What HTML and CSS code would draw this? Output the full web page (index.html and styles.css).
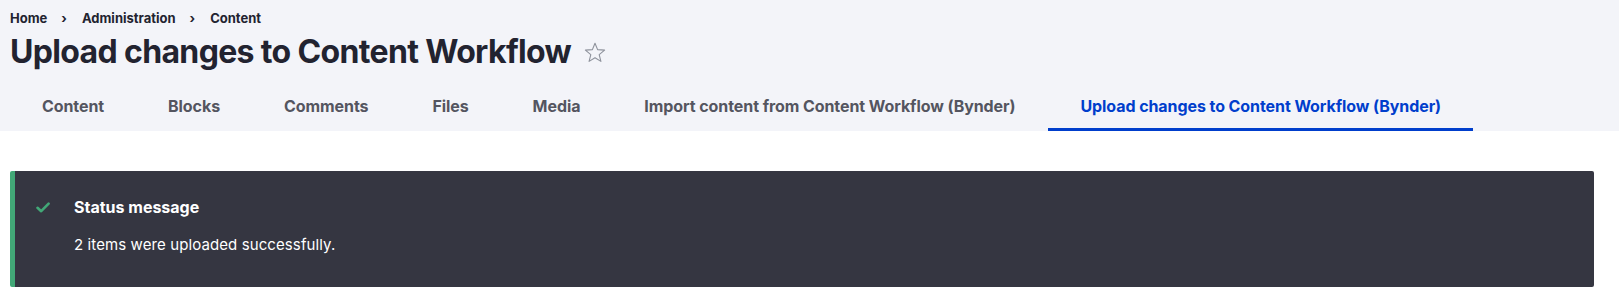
FILE: index.html
```html
<!DOCTYPE html>
<html lang="en">
<head>
<meta charset="utf-8">
<title>Upload changes to Content Workflow</title>
<link rel="stylesheet" href="styles.css">
</head>
<body>
<div class="region-header">
  <nav class="breadcrumb">
    <a href="#">Home</a><span class="sep">›</span><a href="#">Administration</a><span class="sep">›</span><a href="#">Content</a>
  </nav>
  <div class="title-row">
    <h1 class="page-title">Upload changes to Content Workflow</h1>
    <svg class="star" width="22" height="21" viewBox="0 0 22 21" aria-hidden="true"><path d="M11 1.2 L13.6 7.6 L20.6 8.1 L15.2 12.6 L16.9 19.4 L11 15.7 L5.1 19.4 L6.8 12.6 L1.4 8.1 L8.4 7.6 Z" fill="none" stroke="#8e929c" stroke-width="1.1" stroke-linejoin="round"/></svg>
  </div>
  <nav class="tabs">
    <a class="tab" href="#">Content</a>
    <a class="tab" href="#">Blocks</a>
    <a class="tab" href="#">Comments</a>
    <a class="tab" href="#">Files</a>
    <a class="tab" href="#">Media</a>
    <a class="tab" href="#">Import content from Content Workflow (Bynder)</a>
    <a class="tab is-active" href="#">Upload changes to Content Workflow (Bynder)</a>
  </nav>
</div>
<main class="content">
  <div class="messages" role="status">
    <div class="messages-header">
      <svg class="check" width="14" height="11" viewBox="0 0 14 11" aria-hidden="true"><path d="M1.5 5.8 L5.2 9.2 L12.6 1.6" fill="none" stroke="#42a877" stroke-width="2.6" stroke-linecap="round" stroke-linejoin="round"/></svg>
      <h2 class="messages-title">Status message</h2>
    </div>
    <div class="messages-content">2 items were uploaded successfully.</div>
  </div>
</main>
</body>
</html>
```
FILE: styles.css
```css
* { box-sizing: border-box; }
html, body { margin: 0; padding: 0; }
body {
  font-family: Inter, "Noto Sans", "Liberation Sans", sans-serif;
  color: #222330;
  background: #ffffff;
}
a { text-decoration: none; color: inherit; }

.region-header {
  background: #f3f4f9;
  height: 131px;
  padding: 0 10px;
  display: flex;
  flex-direction: column;
}

.breadcrumb {
  display: flex;
  align-items: center;
  font-size: 13px;
  font-weight: 700;
  line-height: 16px;
  padding-top: 10px;
  color: #222330;
}
.breadcrumb .sep {
  padding: 0 15px 0 14px;
  font-weight: 700;
}

.title-row {
  display: flex;
  align-items: center;
  margin-top: 6px;
  height: 40px;
}
.page-title {
  margin: 0;
  font-size: 32px;
  font-weight: 700;
  line-height: 40px;
  letter-spacing: -0.65px;
  color: #222330;
}
.star {
  margin-left: 13px;
  margin-top: 1px;
}

.tabs {
  display: flex;
  margin-top: auto;
}
.tab {
  display: block;
  padding: 2px 32px 0;
  height: 51px;
  line-height: 48px;
  font-size: 16px;
  font-weight: 700;
  color: #545560;
  letter-spacing: -0.08px;
  border-bottom: 3px solid transparent;
}
.tab.is-active {
  color: #003ecc;
  border-bottom-color: #003ecc;
}
.tabs .tab:nth-child(6) { padding-right: 33px; }

.content {
  padding: 40px 25px 20px 10px;
}
.messages {
  background: #353641;
  border-left: 5px solid #42a877;
  border-radius: 2px;
  height: 116px;
  padding: 24px 24px 24px 21px;
  color: #ffffff;
}
.messages-header {
  display: flex;
  align-items: center;
  height: 24px;
}
.check {
  margin-left: 0;
  margin-right: 24px;
}
.messages-title {
  margin: 0;
  font-size: 16px;
  font-weight: 700;
  line-height: 24px;
}
.messages-content {
  margin-top: 14px;
  margin-left: 38px;
  font-size: 15px;
  letter-spacing: 0.1px;
  line-height: 24px;
}
```
